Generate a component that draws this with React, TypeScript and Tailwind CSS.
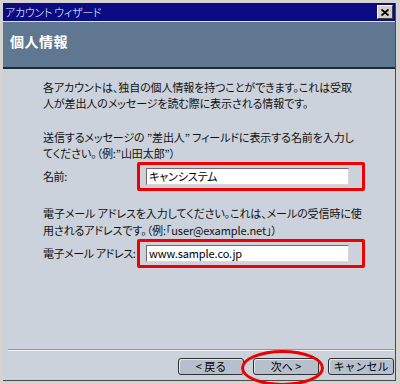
import React from 'react';

const jp = { fontFamily: '"Noto Sans CJK JP", "Liberation Sans", sans-serif' };

const Field: React.FC<{ label: string; value: string }> = ({ label, value }) => (
  <div className="flex items-center">
    <span className="w-[94px] shrink-0 whitespace-nowrap tracking-[-0.4px]">{label}</span>
    <div className="border-[3px] border-[#f00000] rounded-[2px] px-[6px] py-[3px] w-[228px]">
      <div className="h-[17px] w-[203px] bg-white border border-[#6b6b6b] border-b-[#d8d8d8] border-r-[#d8d8d8] flex items-center px-[2px] text-[11px] text-black whitespace-nowrap">
        {value}
      </div>
    </div>
  </div>
);

const Btn: React.FC<{ children: React.ReactNode }> = ({ children }) => (
  <button className="w-[66px] h-[17px] rounded-[3px] border border-[#2f2f2f] bg-[#b6c0cd] shadow-[inset_1px_1px_0_#e4e9ef] text-[11px] leading-none text-black flex items-center justify-center">
    {children}
  </button>
);

export default function App() {
  return (
    <div className="w-[400px] h-[384px] bg-[#d4d3cf] pt-[3px] pl-[3px] pr-[4px] overflow-hidden" style={jp}>
      <div className="w-[393px] h-[378px] flex flex-col border-r border-b border-[#4a4a4a] bg-[#cbd2dc]">
        {/* title bar */}
        <div className="h-[18px] bg-[#0b0b84] flex items-center justify-between pl-[2px] pr-[2px]">
          <span className="text-white text-[11px] font-light tracking-[-0.3px] leading-none" style={{ fontFeatureSettings: '"palt"' }}>
            アカウント ウィザード
          </span>
          <div className="w-[16px] h-[14px] bg-[#d4d0c8] border border-t-white border-l-white border-r-[#404040] border-b-[#404040] flex items-center justify-center">
            <svg width="8" height="7" viewBox="0 0 8 7">
              <path d="M0.5 0.5 L7.5 6.5 M7.5 0.5 L0.5 6.5" stroke="#000" strokeWidth="1.8" />
            </svg>
          </div>
        </div>
        <div className="h-[1px] bg-[#dfe3e8]" />
        {/* header */}
        <div className="h-[47px] bg-[#5f7790] border-b-2 border-[#1f2a36] pl-[7px] pt-[6px]">
          <span className="text-white font-bold text-[14px] leading-[20px] tracking-[0.5px]">個人情報</span>
        </div>
        {/* body */}
        <div className="flex-1 flex flex-col pl-[40px] pt-[10px] text-[11px] text-[#111] tracking-[-0.1px]" style={{ fontFeatureSettings: '"palt"' }}>
          <p className="leading-[16px] whitespace-nowrap">
            各アカウントは、独自の個人情報を持つことができます。これは受取
            <br />
            人が差出人のメッセージを読む際に表示される情報です。
          </p>
          <p className="leading-[16px] whitespace-nowrap mt-[18px]">
            送信するメッセージの ”差出人” フィールドに表示する名前を入力し
            <br />
            てください。（例:”山田太郎”）
          </p>
          <div className="mt-[1px]">
            <Field label="名前:" value="キャンシステム" />
          </div>
          <p className="leading-[17px] whitespace-nowrap mt-[14px]">
            電子メール アドレスを入力してください。これは、メールの受信時に使
            <br />
            用されるアドレスです。（例:｢user@example.net｣）
          </p>
          <div>
            <Field label="電子メール アドレス:" value="www.sample.co.jp" />
          </div>
        </div>
        {/* footer */}
        <div className="ml-[5px] mr-[1px] h-[2px] border-t border-[#8d97a5] border-b border-b-[#f2f4f7]" />
        <div className="relative h-[29px] flex justify-end items-start gap-[9px] pt-[7px] pr-[1px]">
          <Btn>&lt; 戻る</Btn>
          <Btn>次へ &gt;</Btn>
          <Btn>キャンセル</Btn>
          <div className="absolute left-[238px] top-[-1px] w-[83px] h-[36px] rounded-[50%] border-[3px] border-[#ee0000]" />
        </div>
      </div>
    </div>
  );
}
